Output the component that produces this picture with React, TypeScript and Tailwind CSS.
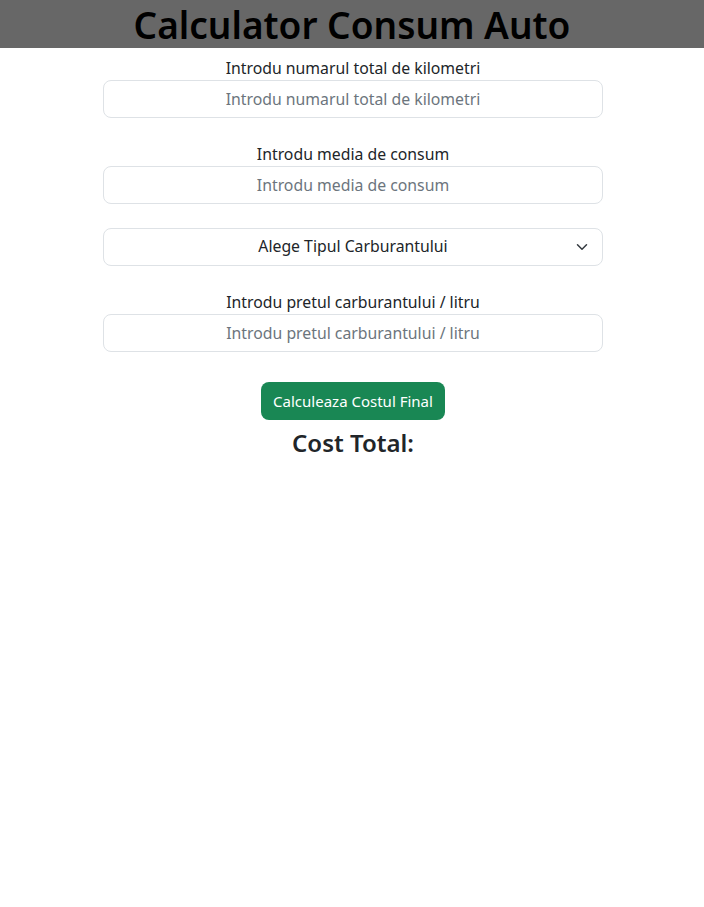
import React from "react";

export default function App() {
  const font = { fontFamily: "'Noto Sans', 'Open Sans', sans-serif" };
  return (
    <div className="min-h-[907px] bg-white text-[#212529]" style={font}>
      <div className="h-12 bg-[#676767] flex items-center justify-center overflow-hidden">
        <h1 className="text-[37px] leading-[48px] font-semibold text-black pt-[2px]">Calculator Consum Auto</h1>
      </div>
      <div className="w-[500px] ml-[103px] flex flex-col items-center pt-2">
        <label className="block text-[15.8px] leading-6 text-center">Introdu numarul total de kilometri</label>
        <input
          className="w-full h-[38px] rounded-lg border border-[#dee2e6] text-center text-[15.8px] placeholder:text-[#6c757d] outline-none"
          placeholder="Introdu numarul total de kilometri"
        />
        <label className="block text-[15.8px] leading-6 text-center mt-6">Introdu media de consum</label>
        <input
          className="w-full h-[38px] rounded-lg border border-[#dee2e6] text-center text-[15.8px] placeholder:text-[#6c757d] outline-none"
          placeholder="Introdu media de consum"
        />
        <div className="relative w-full mt-6">
          <div className="w-full h-[38px] rounded-lg border border-[#dee2e6] flex items-center justify-center text-[15.8px]">
            Alege Tipul Carburantului
          </div>
          <svg className="absolute right-[15px] top-[13px]" width="12" height="12" viewBox="0 0 16 16" fill="none" stroke="#343a40" strokeWidth="2" strokeLinecap="round" strokeLinejoin="round">
            <path d="m2 5 6 6 6-6" />
          </svg>
        </div>
        <label className="block text-[15.8px] leading-6 text-center mt-6">Introdu pretul carburantului / litru</label>
        <input
          className="w-full h-[38px] rounded-lg border border-[#dee2e6] text-center text-[15.8px] placeholder:text-[#6c757d] outline-none"
          placeholder="Introdu pretul carburantului / litru"
        />
        <button className="mt-[30px] h-[38px] px-3 rounded-lg bg-[#198754] text-white text-[15px]">
          Calculeaza Costul Final
        </button>
        <h3 className="text-[24px] leading-[30px] font-semibold mt-2">Cost Total:</h3>
      </div>
    </div>
  );
}
